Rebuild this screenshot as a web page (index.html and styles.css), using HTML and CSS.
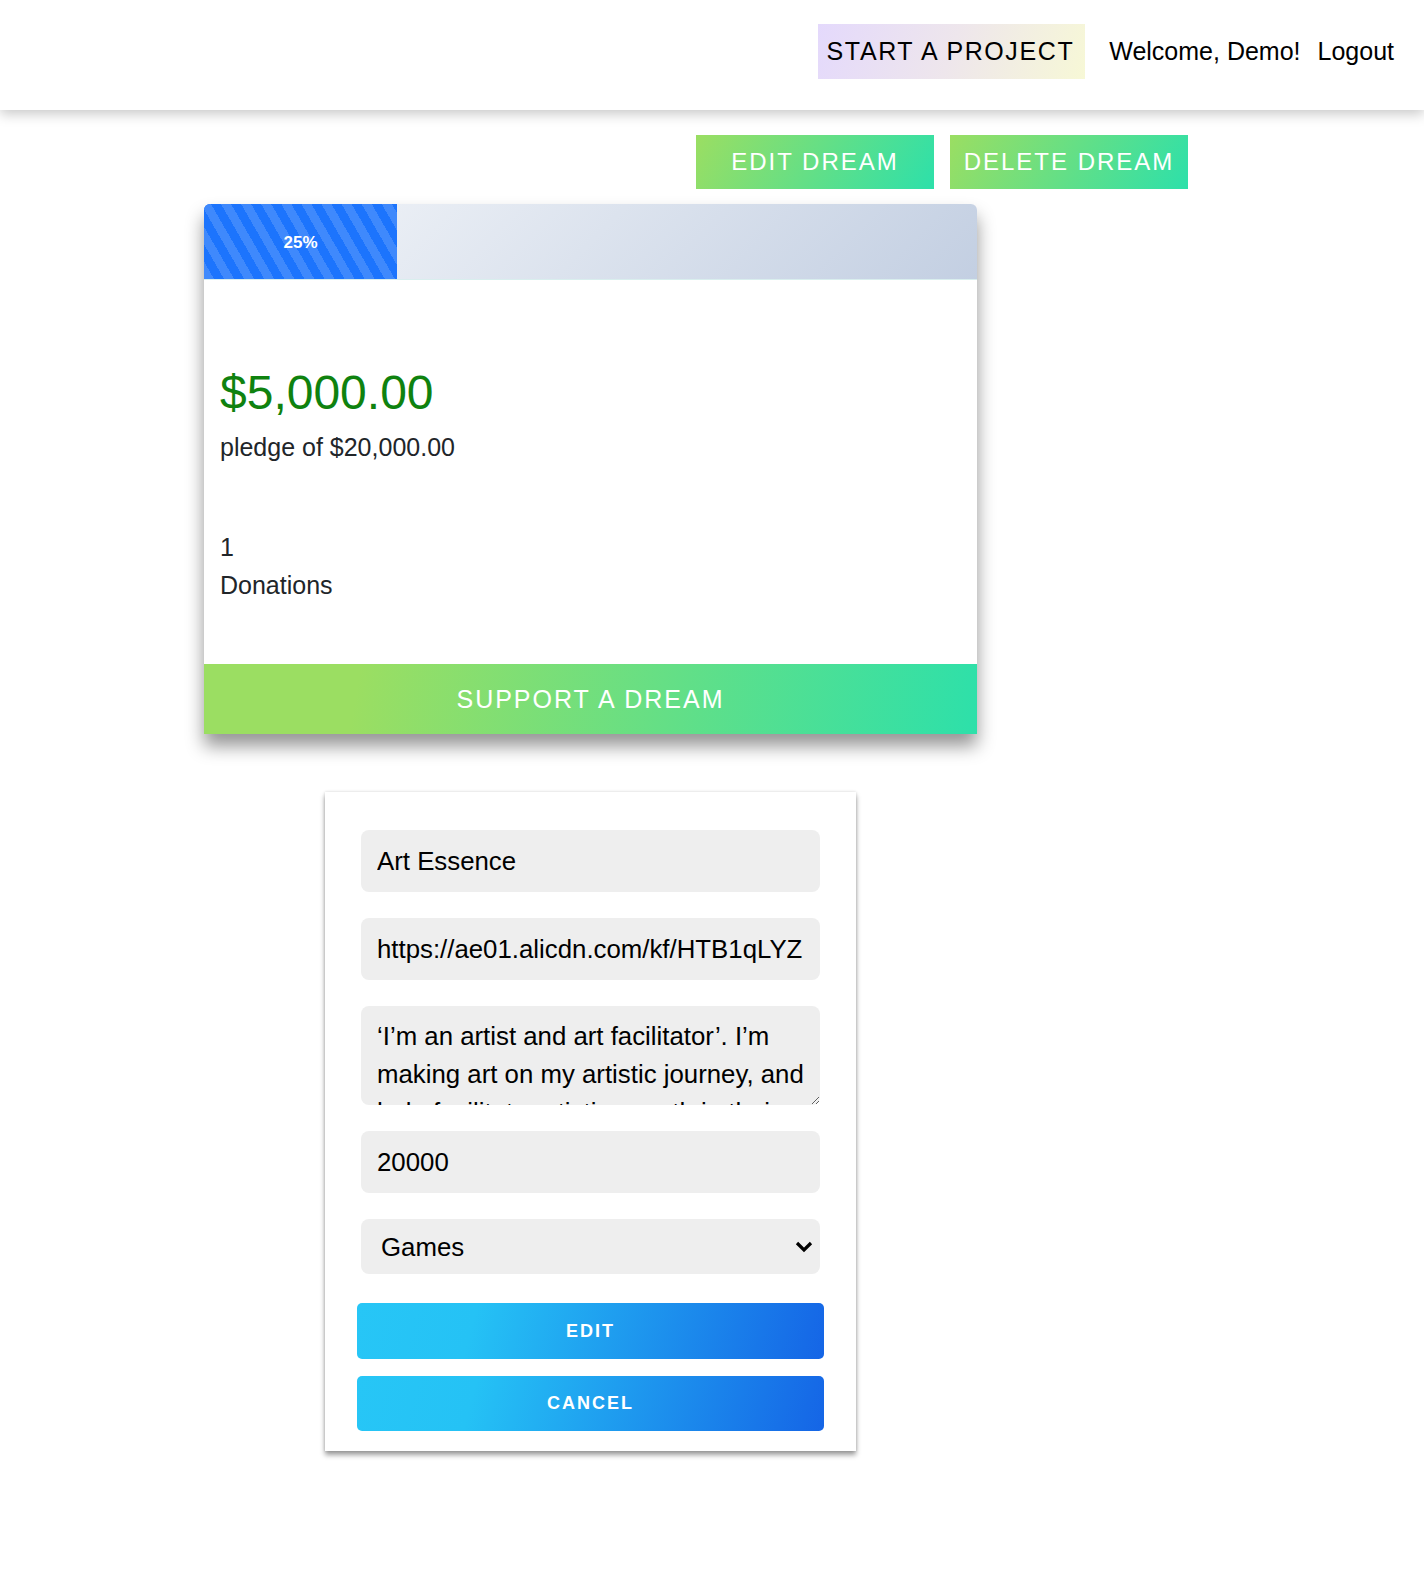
FILE: index.html
```html
<!DOCTYPE html>
<html lang="en">
<head>
<meta charset="utf-8">
<title>Dream</title>
<link rel="stylesheet" href="styles.css">
</head>
<body>
<header class="topbar">
  <a class="start-btn" href="#">START A PROJECT</a>
  <span class="welcome">Welcome, Demo!</span>
  <a class="logout" href="#">Logout</a>
</header>

<main class="page">
  <div class="actions">
    <button class="green-btn">EDIT DREAM</button>
    <button class="green-btn">DELETE DREAM</button>
  </div>

  <section class="dream-card">
    <div class="progress">
      <div class="progress-fill" style="width:25%">25%</div>
    </div>
    <div class="stats">
      <h1 class="amount">$5,000.00</h1>
      <p class="pledge">pledge of $20,000.00</p>
      <div class="donations">
        <div>1</div>
        <div>Donations</div>
      </div>
    </div>
    <button class="support-btn">SUPPORT A DREAM</button>
  </section>

  <div class="form-wrap">
    <form class="edit-form">
      <input class="field" type="text" value="Art Essence">
      <input class="field" type="text" value="https://ae01.alicdn.com/kf/HTB1qLYZ">
      <textarea class="field area">‘I’m an artist and art facilitator’. I’m making art on my artistic journey, and help facilitate artistic growth in their others through workshops.</textarea>
      <input class="field" type="text" value="20000">
      <div class="select-wrap">
        <select class="field select">
          <option>Games</option>
          <option>Art</option>
          <option>Music</option>
        </select>
        <svg class="chevron" width="18" height="12" viewBox="0 0 18 12"><path d="M2 2 L9 9 L16 2" fill="none" stroke="#000" stroke-width="3.2" stroke-linecap="butt"/></svg>
      </div>
      <button class="blue-btn" type="button">EDIT</button>
      <button class="blue-btn cancel" type="button">CANCEL</button>
    </form>
  </div>
</main>
</body>
</html>
```

FILE: styles.css
```css
* { box-sizing: border-box; }

html, body { overflow: hidden; }

body {
  margin: 0;
  font-family: "Liberation Sans", Arial, sans-serif;
  background: #fff;
  color: #000;
}

.topbar {
  height: 110px;
  display: flex;
  justify-content: flex-end;
  align-items: flex-start;
  padding: 24px 30px 0 0;
  background: #fff;
  box-shadow: 0 4px 12px rgba(0, 0, 0, 0.22);
  position: relative;
  z-index: 2;
}

.start-btn {
  display: flex;
  align-items: center;
  height: 55px;
  padding: 0 11px 0 9px;
  font-size: 25px;
  letter-spacing: 1.6px;
  color: #000;
  text-decoration: none;
  background: linear-gradient(110deg, #e4d9fc 0%, #eee6ec 50%, #f7f8d6 100%);
}

.welcome, .logout {
  height: 55px;
  display: flex;
  align-items: center;
  font-size: 25px;
  color: #000;
  text-decoration: none;
}
.welcome { margin-left: 24px; }
.logout { margin-left: 17px; }

.page {
  width: 984px;
  margin-left: 204px;
  padding-bottom: 20px;
}

.actions {
  display: flex;
  justify-content: flex-end;
  gap: 16px;
  margin-top: 25px;
}

.green-btn {
  width: 238px;
  height: 54px;
  border: none;
  padding: 0;
  font-family: "Liberation Sans", Arial, sans-serif;
  font-size: 24px;
  letter-spacing: 2px;
  color: #fff;
  background: linear-gradient(120deg, #9bde62 0%, #2de0aa 100%);
}

.dream-card {
  width: 773px;
  margin-top: 15px;
  background: #fff;
  border-radius: 6px 6px 0 0;
  box-shadow: 0 12px 18px rgba(0, 0, 0, 0.42);
}

.progress {
  height: 76px;
  display: flex;
  border-radius: 6px 6px 0 0;
  overflow: hidden;
  background: linear-gradient(135deg, #f5f7fa 0%, #c3cfe2 100%);
  border-bottom: 1px solid #d9eeee;
}

.progress-fill {
  display: flex;
  align-items: center;
  justify-content: center;
  padding-top: 2px;
  color: #fff;
  font-size: 17px;
  font-weight: bold;
  background-color: #1c74fd;
  background-image: repeating-linear-gradient(60deg, #3f89fc 0 8.7px, #1c74fd 8.7px 17.4px);
}

.stats {
  padding: 0 16px;
  height: 384px;
  color: #212529;
  overflow: hidden;
}

.amount {
  margin: 84px 0 0;
  font-size: 48px;
  font-weight: normal;
  line-height: 58px;
  color: #0f820f;
}

.pledge {
  margin: 0;
  padding-top: 7px;
  font-size: 25px;
  line-height: 36px;
}

.donations {
  margin-top: 63px;
  font-size: 25px;
  line-height: 38px;
}

.support-btn {
  display: block;
  width: 100%;
  height: 70px;
  border: none;
  padding: 0;
  font-family: "Liberation Sans", Arial, sans-serif;
  font-size: 25px;
  letter-spacing: 2px;
  color: #fff;
  background: linear-gradient(100deg, #9bde62 0%, #9bde62 20%, #2de0aa 100%);
}

.form-wrap {
  width: 773px;
  display: flex;
  justify-content: center;
  margin-top: 58px;
}

.edit-form {
  width: 531px;
  padding: 38px 36px 20px;
  background: #fff;
  box-shadow: 0 4px 5px rgba(0, 0, 0, 0.38), 0 0 3px rgba(0, 0, 0, 0.15);
}

.field {
  display: block;
  width: 459px;
  height: 62px;
  margin: 0 0 26px;
  padding: 0 16px;
  border: none;
  border-radius: 8px;
  background: #eee;
  font-family: "Liberation Sans", Arial, sans-serif;
  font-size: 25.8px;
  color: #000;
  outline: none;
}

.area {
  height: 99px;
  padding: 11px 16px 0;
  line-height: 38px;
  overflow: hidden;
  resize: vertical;
  margin-bottom: 26px;
}

.select-wrap {
  position: relative;
  width: 459px;
  margin-bottom: 29px;
}

.select {
  height: 55px;
  margin: 0;
  padding: 0 20px;
  appearance: none;
  -webkit-appearance: none;
}

.chevron {
  position: absolute;
  right: 7px;
  top: 22px;
  pointer-events: none;
}

.blue-btn {
  display: block;
  width: 467px;
  height: 56px;
  margin: 0 -4px 17px;
  border: none;
  border-radius: 5px;
  font-family: "Liberation Sans", Arial, sans-serif;
  font-size: 18px;
  font-weight: bold;
  letter-spacing: 2px;
  color: #fff;
  background: linear-gradient(105deg, #27c6f6 0%, #25c2f5 25%, #1565e6 100%);
}

.blue-btn.cancel {
  height: 55px;
  margin-bottom: 0;
}
```
